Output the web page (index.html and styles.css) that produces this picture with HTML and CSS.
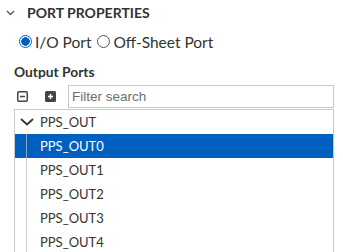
FILE: index.html
```html
<!DOCTYPE html>
<html>
<head>
<meta charset="utf-8">
<link rel="stylesheet" href="styles.css">
</head>
<body>
<div class="panel">
  <div class="section-header">
    <svg class="sec-chevron" width="9" height="6" viewBox="0 0 9 6"><path d="M1 1 L4.5 4.5 L8 1" fill="none" stroke="#555" stroke-width="1.3"/></svg>
    <span class="section-title">PORT PROPERTIES</span>
  </div>
  <div class="radio-row">
    <label class="radio"><span class="radio-dot checked"></span>I/O Port</label>
    <label class="radio"><span class="radio-dot"></span>Off-Sheet Port</label>
  </div>
  <div class="group-label">Output Ports</div>
  <div class="toolbar">
    <svg class="tool-icon" width="11" height="11" viewBox="0 0 11 11"><rect x="0.75" y="0.75" width="9.5" height="9.5" rx="1" fill="none" stroke="#444" stroke-width="1.5"/><path d="M3 5.5 H8" stroke="#444" stroke-width="1.5"/></svg>
    <svg class="tool-icon" width="11" height="11" viewBox="0 0 11 11"><rect x="0" y="0" width="11" height="11" rx="1.5" fill="#444"/><path d="M3 5.5 H8 M5.5 3 V8" stroke="#fff" stroke-width="1.5"/></svg>
    <div class="search"><span class="placeholder">Filter search</span></div>
  </div>
  <div class="tree">
    <div class="row parent">
      <svg class="tree-chevron" width="14" height="8" viewBox="0 0 14 8"><path d="M1 1 L7 6.5 L13 1" fill="none" stroke="#333" stroke-width="1.8"/></svg>
      <span>PPS_OUT</span>
    </div>
    <div class="children">
      <div class="row child selected"><span>PPS_OUT0</span></div>
      <div class="row child"><span>PPS_OUT1</span></div>
      <div class="row child"><span>PPS_OUT2</span></div>
      <div class="row child"><span>PPS_OUT3</span></div>
      <div class="row child"><span>PPS_OUT4</span></div>
    </div>
  </div>
</div>
</body>
</html>
```
FILE: styles.css
```css
html, body {
  margin: 0;
  padding: 0;
  background: #fff;
  overflow: hidden;
}
body {
  font-family: Lato, "Open Sans", sans-serif;
  color: #333;
  width: 343px;
  height: 252px;
}
.panel {
  display: flex;
  flex-direction: column;
}
.section-header {
  display: flex;
  align-items: center;
  height: 25px;
  padding-left: 6px;
}
.sec-chevron {
  margin-right: 12px;
}
.section-title {
  font-weight: 700;
  font-size: 14px;
  color: #333;
}
.radio-row {
  display: flex;
  align-items: center;
  height: 33px;
  padding-left: 19px;
  gap: 6px;
  font-size: 15.5px;
}
.radio {
  display: flex;
  align-items: center;
  gap: 3px;
}
.radio-dot {
  width: 11px;
  height: 11px;
  border-radius: 50%;
  border: 1px solid #555;
  box-sizing: content-box;
}
.radio-dot.checked {
  border-color: #0060c0;
  background: radial-gradient(circle, #0060c0 0 4px, #fff 4.5px);
}
.group-label {
  font-weight: 700;
  font-size: 13.8px;
  padding-left: 14px;
  height: 27px;
  display: flex;
  align-items: center;
}
.toolbar {
  display: flex;
  align-items: center;
  padding-left: 17px;
  height: 23px;
}
.tool-icon {
  margin-right: 17px;
}
.tool-icon + .tool-icon {
  margin-right: 12px;
}
.search {
  width: 266px;
  height: 23px;
  box-sizing: border-box;
  border: 1px solid #c8c8c8;
  display: flex;
  align-items: center;
  padding-left: 3px;
  font-family: "Liberation Sans", Arial, sans-serif;
  font-size: 13.5px;
}
.placeholder {
  color: #6d6d6d;
}
.tree {
  margin-top: 1px;
  margin-left: 14px;
  width: 320px;
  height: 150px;
  box-sizing: border-box;
  border: 1px solid #c8c8c8;
  border-bottom: none;
}
.row {
  height: 24px;
  display: flex;
  align-items: center;
  font-size: 13px;
  color: #333;
}
.parent {
  padding-left: 5px;
}
.tree-chevron {
  margin-right: 6px;
}
.children {
  position: relative;
}
.children::before {
  content: "";
  position: absolute;
  left: 11px;
  top: 0;
  bottom: 0;
  width: 1px;
  background: rgba(190, 190, 190, 0.75);
}
.child {
  padding-left: 25px;
}
.selected {
  background: #0060bf;
  color: #fff;
}
```
